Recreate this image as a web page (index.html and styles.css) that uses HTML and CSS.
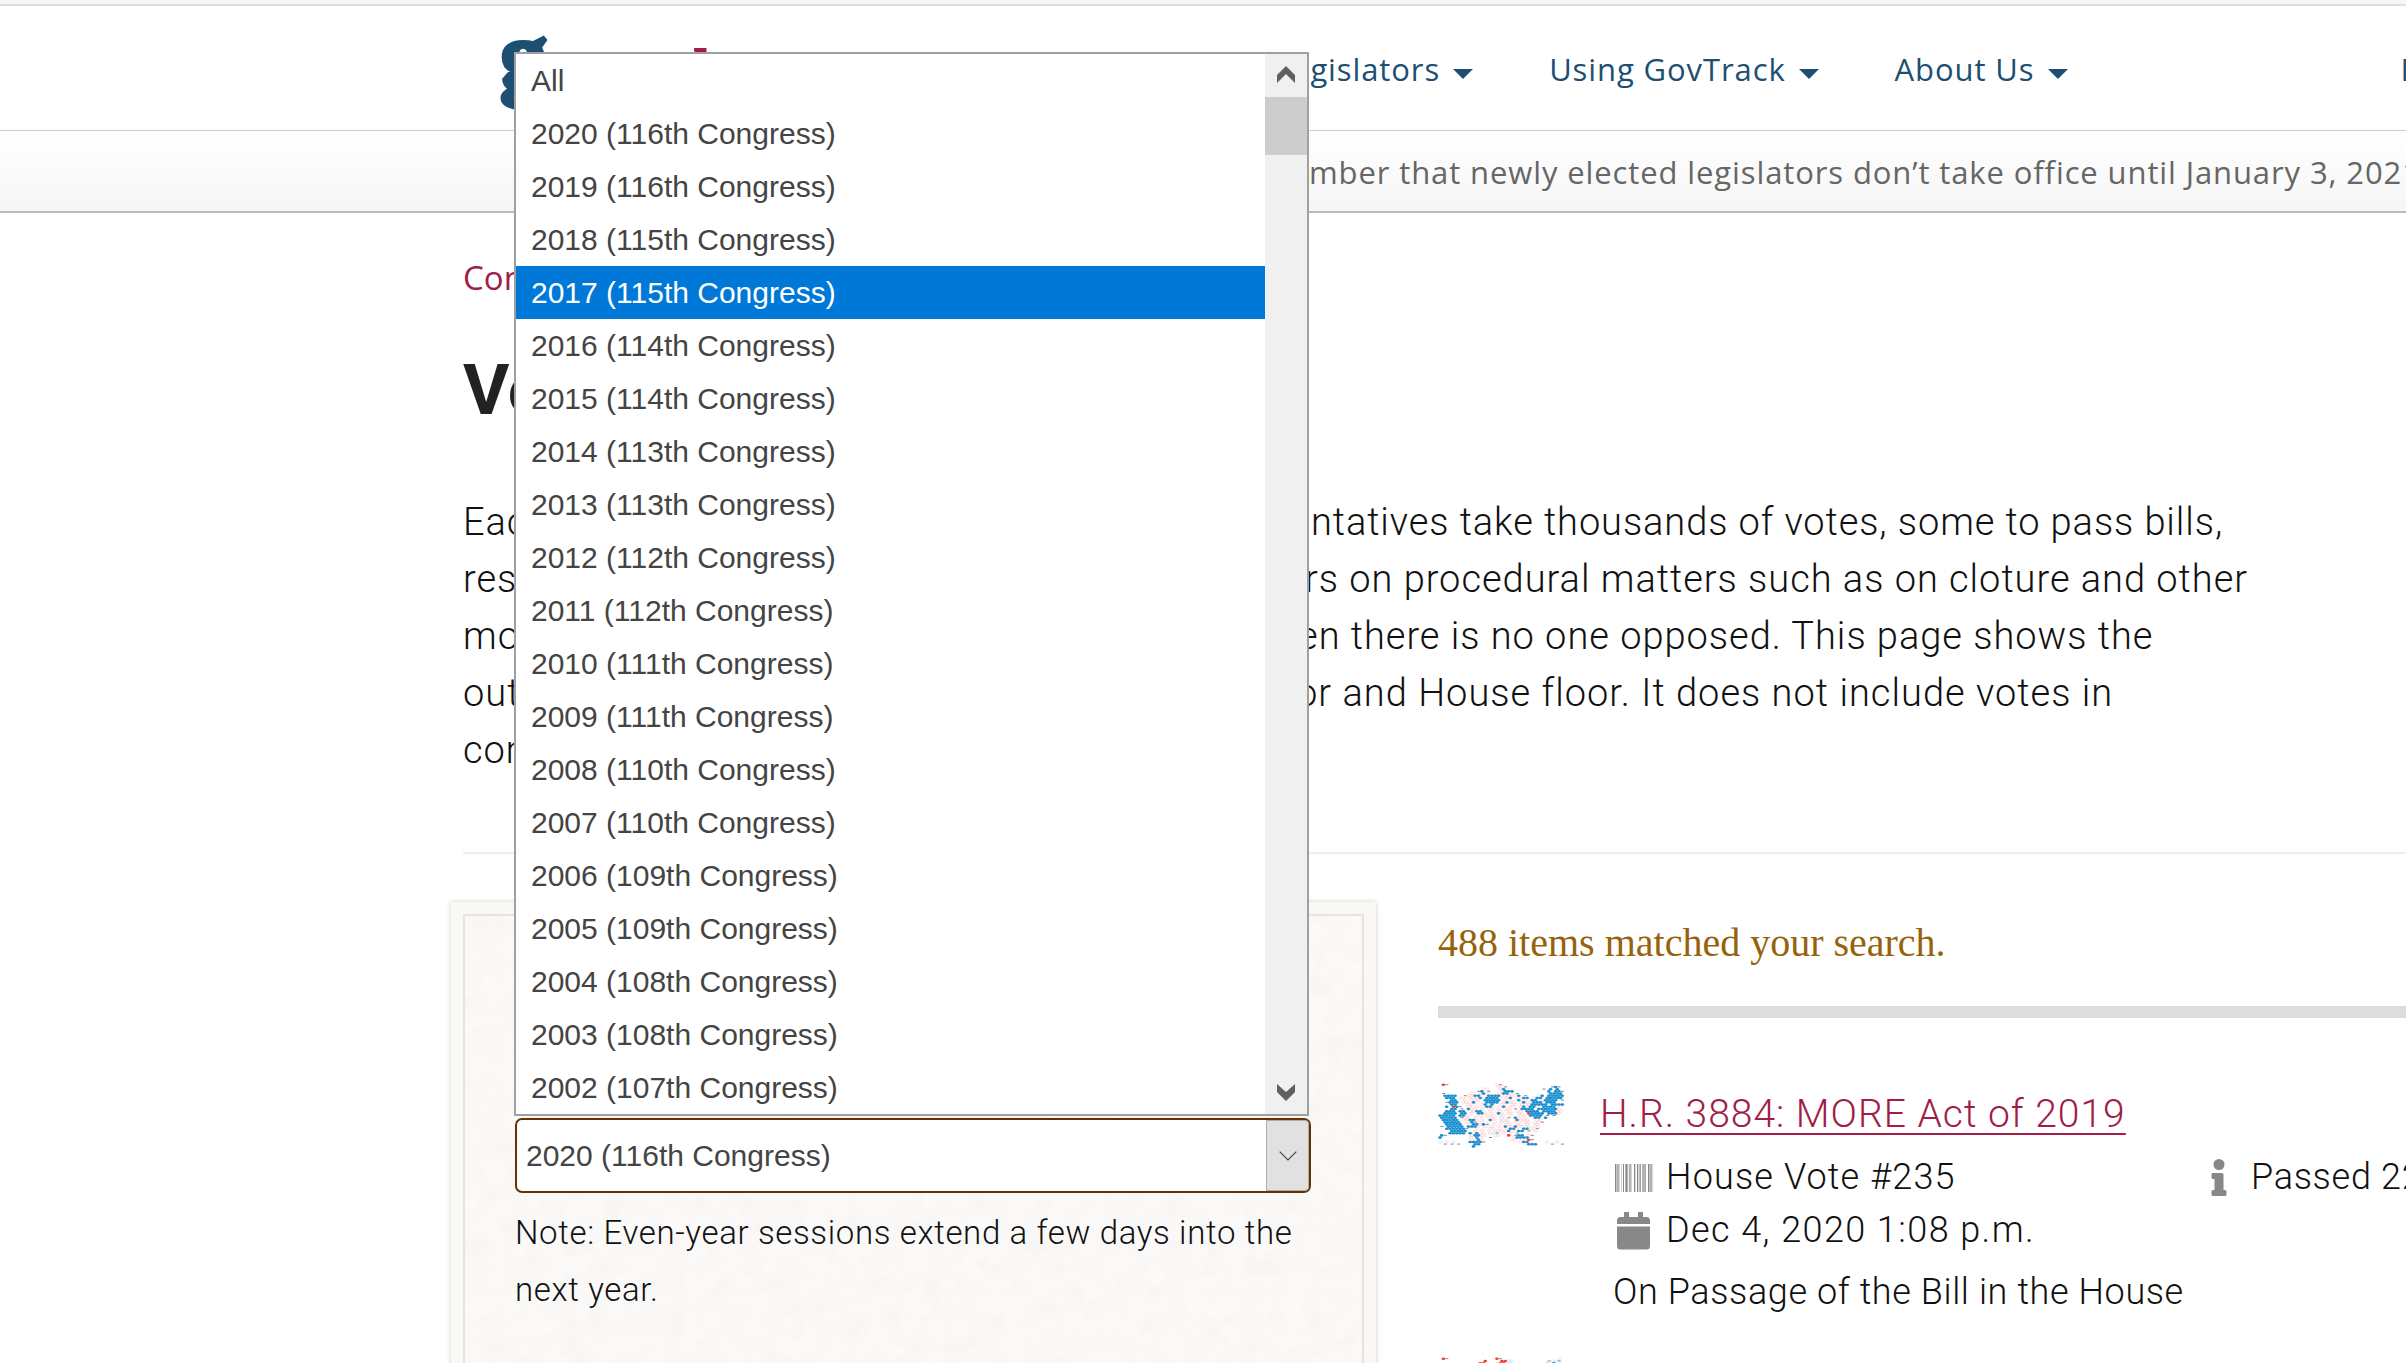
FILE: index.html
```html
<!DOCTYPE html>
<html lang="en">
<head>
<meta charset="utf-8">
<title>Votes - GovTrack.us</title>
<link rel="stylesheet" href="styles.css">
</head>
<body>
<div class="strip"></div>
<header class="header">
  <svg class="logo" width="774" height="120" viewBox="0 0 774 120" role="img" aria-label="govtrack">
    <text class="logo-g" x="1" y="80">g</text>
    <text class="logo-track" x="100" y="79">track</text>
  </svg>
  <nav class="nav">
    <a class="nav-item">Legislators<i class="caret"></i></a>
    <a class="nav-item">Using GovTrack<i class="caret"></i></a>
    <a class="nav-item">About Us<i class="caret"></i></a>
    <a class="nav-item nav-login">Log In</a>
  </nav>
</header>
<div class="notice"><p>mber that newly elected legislators don’t take office until January 3, 2021.</p></div>

<main class="main">
  <div class="crumb">Congress</div>
  <h1 class="title">Votes</h1>
  <div class="intro">
    <p class="l1"><span>Each</span>ntatives take thousands of votes, some to pass bills,</p>
    <p class="l2"><span>reso</span>rs on procedural matters such as on cloture and other</p>
    <p class="l3"><span>moti</span>en there is no one opposed. This page shows the</p>
    <p class="l4"><span>outc</span>or and House floor. It does not include votes in</p>
    <p class="l5">committee.</p>
  </div>
  <hr class="rule">
  <div class="columns">
    <aside class="card">
      <svg class="paper" width="100%" height="100%" aria-hidden="true">
        <filter id="grain" x="0" y="0" width="100%" height="100%">
          <feTurbulence type="fractalNoise" baseFrequency="0.05" numOctaves="4" seed="8"/>
          <feColorMatrix values="0 0 0 0 .55  0 0 0 0 .53  0 0 0 0 .52  .14 0 0 0 -.045"/>
        </filter>
        <rect width="100%" height="100%" filter="url(#grain)"/>
      </svg>
      <div class="card-inner">
        <div class="select">
          <span class="select-value">2020 (116th Congress)</span>
          <span class="select-button"><svg width="18" height="10" viewBox="0 0 18 10"><path d="M.7.7 9 9 17.3.7" fill="none" stroke="#444" stroke-width="1.2"/></svg></span>
          <div class="menu">
            <ul class="options">
              <li>All</li>
              <li>2020 (116th Congress)</li>
              <li>2019 (116th Congress)</li>
              <li>2018 (115th Congress)</li>
              <li class="selected">2017 (115th Congress)</li>
              <li>2016 (114th Congress)</li>
              <li>2015 (114th Congress)</li>
              <li>2014 (113th Congress)</li>
              <li>2013 (113th Congress)</li>
              <li>2012 (112th Congress)</li>
              <li>2011 (112th Congress)</li>
              <li>2010 (111th Congress)</li>
              <li>2009 (111th Congress)</li>
              <li>2008 (110th Congress)</li>
              <li>2007 (110th Congress)</li>
              <li>2006 (109th Congress)</li>
              <li>2005 (109th Congress)</li>
              <li>2004 (108th Congress)</li>
              <li>2003 (108th Congress)</li>
              <li>2002 (107th Congress)</li>
            </ul>
            <div class="scrollbar">
              <svg class="arrow" width="18" height="17" viewBox="0 0 18 17"><path d="M0 9 9 0l9 9v8L9 8l-9 9z" fill="#606060"/></svg>
              <div class="thumb"></div>
              <svg class="arrow arrow-down" width="18" height="17" viewBox="0 0 18 17"><path d="M0 0l9 8 9-8v8l-9 9-9-9z" fill="#606060"/></svg>
            </div>
          </div>
        </div>
        <p class="note">Note: Even-year sessions extend a few days into the<br>next year.</p>
      </div>
    </aside>

    <section class="results">
      <p class="count">488 items matched your search.</p>
      <div class="bar"></div>
      <article class="vote">
        <svg class="map" id="map1" width="128" height="66" viewBox="0 0 128 66"></svg>
        <div class="vote-body">
          <a class="vote-title">H.R. 3884: MORE Act of 2019</a>
          <div class="vote-row">
            <span class="icon"><svg width="39" height="28" viewBox="0 0 39 28" fill="#888">
              <path d="M1 0h1.5v28H1zM9 0h1v28H9zM12 0h1.5v28H12zM20 0h1.3v28H20zM23 0h1v28h-1zM25.500 0h1.3v28h-1.3zM34 0h1.500v28H34z"/>
              <path opacity=".65" d="M3 0h2v28H3zM15 0h2.500v28H15zM28 0h4v28h-4zM36 0h2.500v28H36zM11 0h1v28h-1z"/>
              <path opacity=".35" d="M5 0h1v28H5zM7 0h1v28H7zM24 0h1v28h-1zM13.500 0h1v28h-1z"/></svg></span>
            <span class="t-house">House Vote #235</span>
            <span class="icon-info"><svg width="16" height="38" viewBox="0 0 16 38" fill="#888"><circle cx="8" cy="5.500" r="5.500"/><path d="M1.500 14h9.500q1.500 0 1.500 1.500V31h1.500q1.500 0 1.500 1.500v3q0 1.500-1.500 1.500H2Q.5 37 .5 35.500v-3Q.5 31 2 31h1.500V20H2Q.5 20 .5 18.500v-3Q.5 14 1.500 14z"/></svg></span>
            <span class="t-passed">Passed 220/204</span>
          </div>
          <div class="vote-row">
            <span class="icon icon-cal"><svg width="33" height="38" viewBox="0 0 33 38" fill="#888"><path d="M7 0h5v5h9V0h5v5h3.500Q33 5 33 8.500V12H0V8.500Q0 5 3.500 5H7zM0 14.500h33v19.500q0 3.500-3.500 3.500h-26Q0 37.500 0 34z"/></svg></span>
            <span class="t-date">Dec 4, 2020 1:08 p.m.</span>
          </div>
          <p class="vote-desc">On Passage of the Bill in the House</p>
        </div>
      </article>
      <article class="vote vote-next">
        <svg class="map" id="map2" width="128" height="66" viewBox="0 0 128 66"></svg>
      </article>
    </section>
  </div>
</main>
<script src="map.js"></script>
</body>
</html>
```
FILE: styles.css
```css
* { box-sizing: border-box; }
body { margin: 0; height: 1363px; overflow: hidden; background: #fff; color: #111; }
p, h1, ul { margin: 0; padding: 0; }

.strip { height: 6px; background: #f7f7f7; border-bottom: 2px solid #dfdfdf; }

.header { height: 125px; padding-left: 499px; display: flex; align-items: center; overflow: hidden; border-bottom: 1px solid #ccc; background: #fff; }
.logo { flex: none; }
.logo text { font-family: "Liberation Serif", serif; font-weight: 700; }
.logo-g { font-size: 95px; fill: #1d4f73; stroke: #1d4f73; stroke-width: 4px; }
.logo-track { font-size: 55px; fill: #a01d48; stroke: #a01d48; stroke-width: 2px; }

.nav { display: flex; gap: 76px; padding: 2px 0 0 2px; font: 400 31px/50px "Open Sans", sans-serif; letter-spacing: .9px; color: #1d4f73; white-space: nowrap; }
.nav-item { display: flex; align-items: center; gap: 13px; }
.nav-login { margin-left: 257px; }
.caret { width: 0; height: 0; margin-top: 9px; border: 10px solid transparent; border-top-color: #1d4f73; border-bottom-width: 0; }

.notice { height: 82px; padding: 2px 0 0 1309px; display: flex; align-items: center; overflow: hidden; background: linear-gradient(#fff, #f6f6f6); border-bottom: 2px solid #bbb; }
.notice p { font: 400 31px/50px "Open Sans", sans-serif; letter-spacing: .89px; color: #666; white-space: nowrap; }

.main { padding-left: 463px; font-family: Roboto, sans-serif; font-weight: 300; white-space: nowrap; }
.crumb { margin-top: 40px; font: 400 33px/50px "Open Sans", sans-serif; color: #a01d48; }
.title { margin-top: 47px; font-size: 71px; line-height: 80px; font-weight: 700; color: #222; }
.intro { margin-top: 64px; height: 358px; font-size: 38px; line-height: 57.1px; letter-spacing: .98px; }
.intro p { display: flex; }
.intro span { flex: none; overflow: hidden; width: 848px; }
.intro .l1 { letter-spacing: .91px; }
.intro .l2 span { width: 842px; }
.intro .l3 span { width: 835px; }
.intro .l4 span { width: 833px; }
.intro .l4 { letter-spacing: 1.02px; }
.rule { margin: 0; height: 2px; border: 0; background: #eee; }

.columns { display: flex; gap: 62px; margin: 48px 0 0 -12px; }

.card { position: relative; flex: none; width: 925px; height: 520px; padding: 12px; background: #f9f8f4; box-shadow: 0 0 5px rgba(0, 0, 0, .2); }
.paper { position: absolute; inset: 14px; width: 897px; height: 492px; background: #fbfaf9; }
.card-inner { position: relative; height: 100%; padding: 202px 50px 0; border: 2px solid #e6e5dc; }
.select { position: relative; width: 796px; height: 75px; display: flex; border: 2px solid #663300; border-radius: 7px; background: #fff; color: #444; font: 400 30px/71px "Liberation Sans", sans-serif; }
.select-value { flex: 1; padding-left: 9px; }
.select-button { width: 43px; display: flex; align-items: center; justify-content: center; background: #e1e1e1; border: 1px solid #adadad; border-radius: 0 4px 4px 0; }
.menu { position: absolute; z-index: 2; left: -3px; bottom: calc(100% + 4px); width: 795px; height: 1064px; display: flex; border: 2px solid #a0a0a0; background: #fff; line-height: 53px; }
.options { flex: 1; list-style: none; }
.options li { height: 53px; padding-left: 15px; }
.options .selected { background: #0078d7; color: #fff; }
.scrollbar { width: 42px; display: flex; flex-direction: column; align-items: center; padding-top: 12px; background: #f0f0f0; }
.thumb { width: 42px; height: 58px; margin-top: 14px; background: #cdcdcd; }
.arrow-down { margin: auto 0 13px; }
.note { margin-top: 11px; font-size: 33px; line-height: 57.2px; letter-spacing: .64px; }

.results { flex: 1; padding-top: 16px; overflow: hidden; height: 462px; }
.count { font: 400 40px/50px "Liberation Serif", serif; color: #96620c; }
.bar { height: 12px; margin-top: 38px; background: #ddd; }
.vote { display: flex; margin-top: 65px; height: 209px; }
.map { flex: none; margin-right: 34px; }
.vote-body { padding-top: 6px; font-size: 36px; line-height: 53px; }
.vote-title { display: block; height: 62px; font-size: 39px; line-height: 50px; letter-spacing: 1px; color: #a01d48; text-decoration: underline 2px; text-underline-offset: 6px; text-decoration-skip-ink: none; }
.vote-row { display: flex; align-items: center; height: 53px; padding-left: 14px; }
.vote-row svg { display: block; }
.icon { width: 52px; }
.icon-cal { padding-left: 3px; }
.t-house { width: 545px; letter-spacing: 1.15px; }
.icon-info { width: 40px; }
.t-date { letter-spacing: 1.42px; }
.t-passed { letter-spacing: .7px; }
.vote-desc { margin-top: 9px; padding-left: 13px; letter-spacing: .6px; }
.vote-next { margin-top: 65px; }
```
FILE: map.js
```javascript
// Hexagon cartogram rows. B/R filled, o/b light outlines, g vacant, - state label.
const house = [
  ' R-              o-                  ',
  '                 oo-             -B- ',
  '             oo   oB           - B B ',
  '           -B -   oBBB          B BB-',
  ' -       oo oBo  ooBBo -         BBBB',
  ' BBBB  -ooBBo BBBBoooooB -   oB BBBBB',
  '  BBB oo oooB BBBBo oB ooBB oBB BBBBB',
  '   BB  o ooo BBBBB o o Boo BB oBBBB -',
  '  -BBB oo Bo oBBBB oBoo oBooBBBoBBB  ',
  '   BB   oo  oBoB  oo oo oooBBBBB BBBB',
  '  B RB- oo o oBBo oB oo oBoBBo BBBBo ',
  '   BB - Boo o oo o oo - BBBB BBBBBBo ',
  '  BBB BB ooBBo o oo oo oo BBBB BBBBoo',
  ' BBBB BB o BBo o Bo oo oo RBBBB BBBo ',
  'BBBBB BBo  oo ooo gg o  oo BBBB - -  ',
  'BBBBB -oo o o ooo g - Bo o oBB B     ',
  ' BBBBB ooBBo o Bo ggo  Booo  oo      ',
  ' BBBBB  oB- o o o ggo oo oo oo-      ',
  '  BBBBB o BBoB- o o oo oo o gg       ',
  '- BBBBB BBBo ggo o BooBoggg go       ',
  '  BBBBBB-  o o gg o oBBo BBoo-       ',
  '   BBBBB  o o o ggooBooBB - o        ',
  '   BBBBB BoBoo gg- o o -             ',
  'B-       oBBoo  gg  R -BB o-         ',
  'B        o Bo  -      oBBBB          ',
  '         ooBo        oo ooR-         ',
  'g g g    BBBB-          oBBo    g  g ',
  ' - - -    BB              BBB    -  -',
  '          B                          '
];
const next = [
  ' R-              R-                 b',
  '             R    RRbb          -bb- ',
  '            RR   oRRob          - B b'
];
const fills = { B: '#1a90d0', R: '#f63b35' };
const rings = { o: '#ffbcbc', b: '#a9d8f0', g: '#cfcfcf' };
function draw(id, rows) {
  let out = '';
  rows.forEach((row, r) => {
    [...row].forEach((ch, c) => {
      const x = 2 + c * 3.35 + (r % 2) * 1.67;
      const y = 1.8 + r * 2.2;
      if (fills[ch]) out += `<ellipse cx="${x}" cy="${y}" rx="1.85" ry="1.3" fill="${fills[ch]}"/>`;
      else if (rings[ch]) out += `<ellipse cx="${x}" cy="${y}" rx="1.6" ry="1.3" fill="none" stroke="${rings[ch]}" stroke-width=".5"/>`;
      else if (ch === '-') out += `<rect x="${x - 1.3}" y="${y - .6}" width="3" height="1" fill="#888"/>`;
    });
  });
  document.getElementById(id).innerHTML = out;
}
draw('map1', house);
draw('map2', next);
```
